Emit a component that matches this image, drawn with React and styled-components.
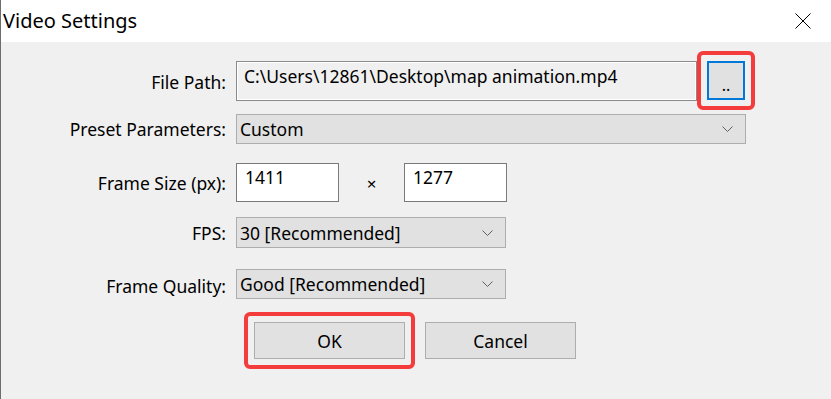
import React from "react";
import styled, { createGlobalStyle } from "styled-components";

const Global = createGlobalStyle`
  html, body { margin: 0; padding: 0; background: #f0f0f0; }
  body { font-family: "Noto Sans", "Open Sans", sans-serif; color: #000; }
`;

const Window = styled.div`
  width: 830px;
  height: 399px;
  border-left: 1px solid #6d6d6d;
  background: #f0f0f0;
  overflow: hidden;
`;

const TitleBar = styled.div`
  height: 42px;
  background: #fff;
  display: flex;
  align-items: center;
  justify-content: space-between;
  padding: 0 20px 0 2px;
`;

const Title = styled.div`
  font-size: 20px;
  margin-top: -1px;
`;

const CloseIcon = () => (
  <svg width="16" height="16" viewBox="0 0 16 16">
    <path d="M0.5 0.5 L15.5 15.5 M15.5 0.5 L0.5 15.5" stroke="#000" strokeWidth="1" fill="none" />
  </svg>
);

const Form = styled.div`
  display: flex;
  flex-direction: column;
  padding-top: 9px;
`;

const Row = styled.div`
  display: grid;
  grid-template-columns: 225px auto;
  column-gap: 10px;
  align-items: center;
  margin-top: ${(p) => p.$mt || 0}px;
`;

const Label = styled.div`
  text-align: right;
  font-size: 17.5px;
  margin-top: ${(p) => p.$dy || 0}px;
`;

const Controls = styled.div`
  display: flex;
  align-items: center;
`;

const PathField = styled.div`
  width: 461px;
  height: 40px;
  box-sizing: border-box;
  border: 1px solid #8a8a8a;
  box-shadow: inset -1px -1px 0 #fff, inset 1px 1px 0 #fff;
  background: #f0f0f0;
  font-size: 17.5px;
  padding: 2px 7px;
  white-space: nowrap;
`;

const Highlight = styled.div`
  display: inline-flex;
  border: 4px solid #f53c3c;
  border-radius: 6px;
  padding: 6px;
`;

const BrowseButton = styled.button`
  width: 38px;
  height: 39px;
  box-sizing: border-box;
  border: 2px solid #0078d7;
  background: #e1e1e1;
  font-family: inherit;
  font-size: 16px;
  padding: 8px 0 0;
  color: #000;
`;

const Select = styled.div`
  width: ${(p) => p.$w}px;
  height: ${(p) => p.$h}px;
  box-sizing: border-box;
  border: 1px solid #adadad;
  background: #e1e1e1;
  display: flex;
  align-items: center;
  justify-content: space-between;
  padding: 0 12px 0 3px;
  font-size: 17.5px;
`;

const Chevron = () => (
  <svg width="11" height="6" viewBox="0 0 11 6">
    <polyline points="0.5,0.5 5.5,5.5 10.5,0.5" stroke="#606060" strokeWidth="1" fill="none" />
  </svg>
);

const SizeBox = styled.div`
  width: 103px;
  height: 39px;
  box-sizing: border-box;
  border: 1px solid #7a7a7a;
  background: #fff;
  font-size: 17.5px;
  padding: 1px 8px;
`;

const Times = styled.div`
  width: 65px;
  text-align: center;
  font-size: 17px;
  padding-top: 2px;
`;

const ButtonRow = styled.div`
  display: flex;
  align-items: center;
  margin-left: 8px;
`;

const DialogButton = styled.button`
  width: 151px;
  height: 37px;
  box-sizing: border-box;
  border: 1px solid #adadad;
  background: #e1e1e1;
  font-family: inherit;
  font-size: 17.5px;
  color: #000;
  padding: 0;
  margin-left: ${(p) => p.$ml || 0}px;
`;

export default function App() {
  return (
    <>
      <Global />
      <Window>
        <TitleBar>
          <Title>Video Settings</Title>
          <CloseIcon />
        </TitleBar>
        <Form>
          <Row>
            <Label $dy={2}>File Path:</Label>
            <Controls>
              <PathField>C:\Users\12861\Desktop\map animation.mp4</PathField>
              <Highlight>
                <BrowseButton>..</BrowseButton>
              </Highlight>
            </Controls>
          </Row>
          <Row $mt={4}>
            <Label>Preset Parameters:</Label>
            <Select $w={510} $h={30}>
              <span>Custom</span>
              <Chevron />
            </Select>
          </Row>
          <Row $mt={19}>
            <Label>Frame Size (px):</Label>
            <Controls>
              <SizeBox>1411</SizeBox>
              <Times>×</Times>
              <SizeBox>1277</SizeBox>
            </Controls>
          </Row>
          <Row $mt={15}>
            <Label>FPS:</Label>
            <Select $w={270} $h={31}>
              <span>30 [Recommended]</span>
              <Chevron />
            </Select>
          </Row>
          <Row $mt={21}>
            <Label $dy={3}>Frame Quality:</Label>
            <Select $w={270} $h={30}>
              <span>Good [Recommended]</span>
              <Chevron />
            </Select>
          </Row>
          <Row $mt={13}>
            <span />
            <ButtonRow>
              <Highlight>
                <DialogButton>OK</DialogButton>
              </Highlight>
              <DialogButton $ml={10}>Cancel</DialogButton>
            </ButtonRow>
          </Row>
        </Form>
      </Window>
    </>
  );
}
